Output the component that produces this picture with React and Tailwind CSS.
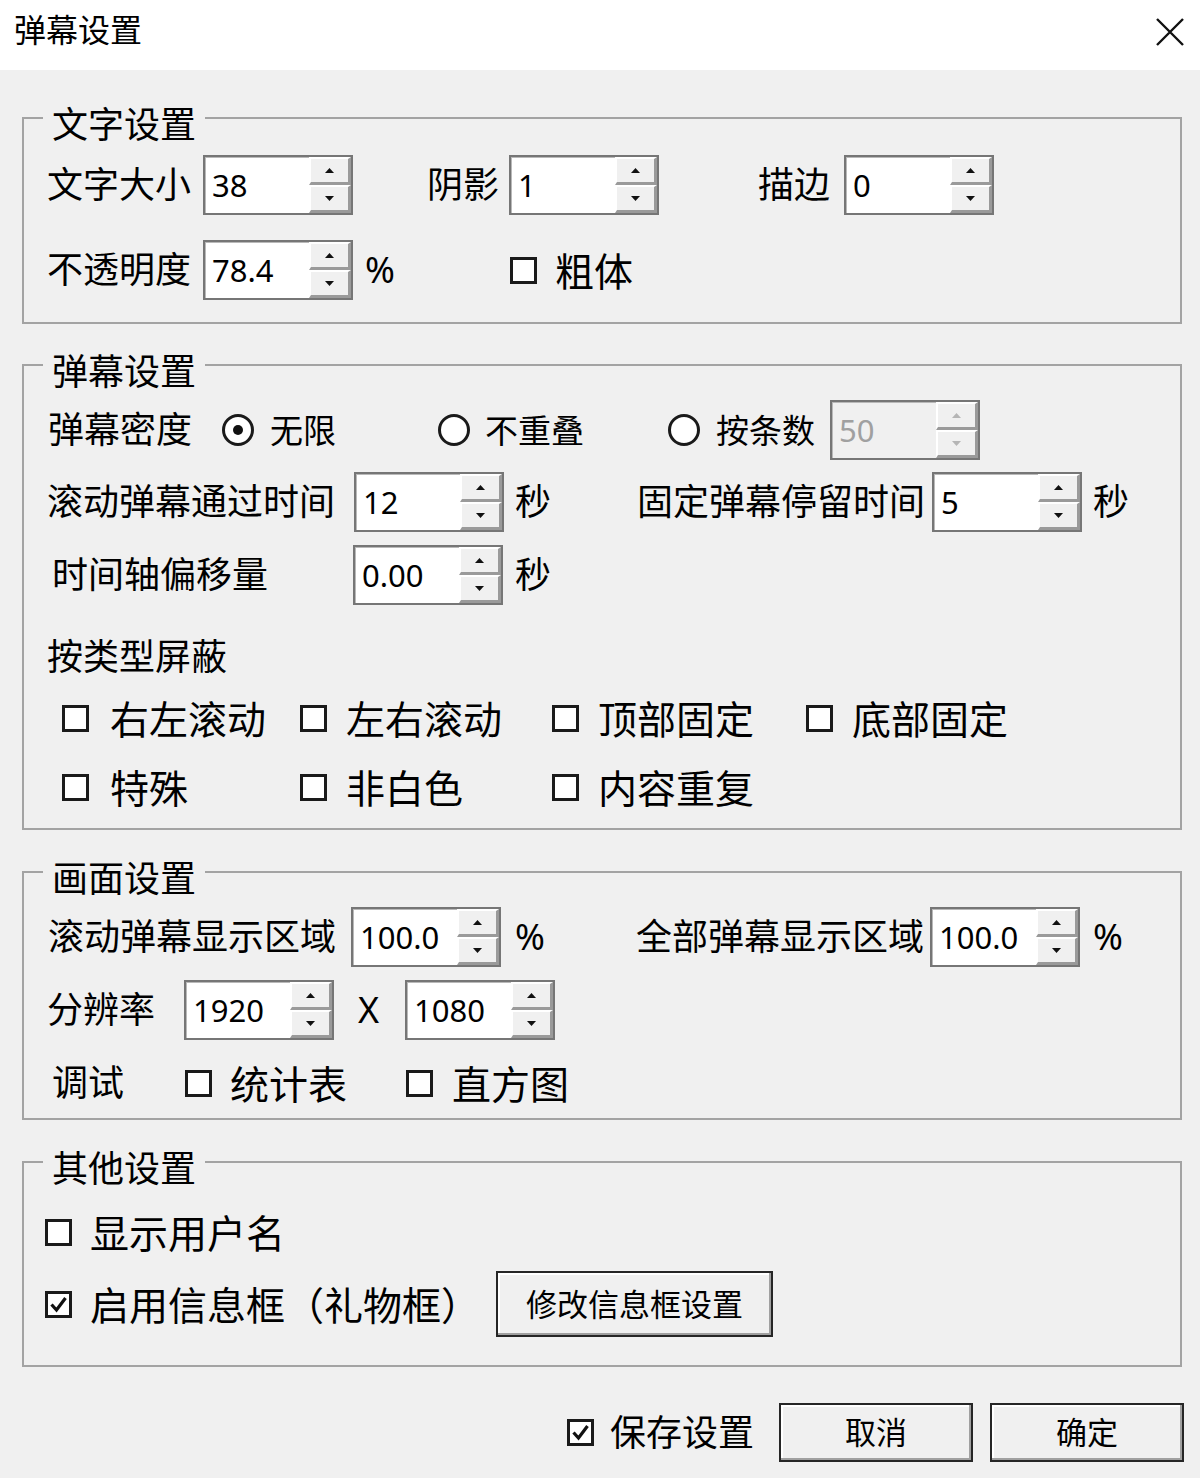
import React from "react";

function Spin({ value, disabled }) {
  return (
    <div
      className={
        "w-[150px] h-[60px] shrink-0 flex border-2 border-[#767676] shadow-[inset_1px_1px_0_#b9b9b9] " +
        (disabled ? "bg-[#f0f0f0] h-[58px]" : "bg-white")
      }
    >
      <div
        className={
          "flex-1 flex items-center pl-[7px] text-[31px] leading-none " +
          (disabled ? "text-[#a0a0a0]" : "text-black")
        }
      >
        {value}
      </div>
      <div className="w-[42px] flex flex-col">
        <SpinBtn up disabled={disabled} />
        <SpinBtn disabled={disabled} />
      </div>
    </div>
  );
}

function SpinBtn({ up, disabled }) {
  const c = disabled ? "#b5b5b5" : "#111";
  return (
    <div className="flex-1 bg-[#f0f0f0] border-t-2 border-l-2 border-t-white border-l-white border-b-[3px] border-r-[3px] border-b-[#9a9a9a] border-r-[#9a9a9a] flex items-center justify-center">
      <svg width="9" height="5" viewBox="0 0 9 5">
        {up ? <polygon points="4.5,0 9,5 0,5" fill={c} /> : <polygon points="0,0 9,0 4.5,5" fill={c} />}
      </svg>
    </div>
  );
}

function Check({ checked }) {
  return (
    <div className="w-[27px] h-[27px] shrink-0 border-[3px] border-[#1a1a1a] bg-white flex items-center justify-center">
      {checked && (
        <svg width="19" height="19" viewBox="0 0 19 19">
          <path d="M2.5 9.5 L7.5 15 L16.5 3" fill="none" stroke="#111" strokeWidth="3.2" />
        </svg>
      )}
    </div>
  );
}

function Radio({ checked }) {
  return (
    <div className="w-[32px] h-[32px] shrink-0 rounded-full border-[3px] border-[#1a1a1a] bg-white flex items-center justify-center">
      {checked && <div className="w-[10px] h-[10px] rounded-full bg-[#111]" />}
    </div>
  );
}

function Legend({ children }) {
  return (
    <legend className="ml-[19px] px-[9px] text-[36px] leading-none">
      <span className="relative top-[7px]">{children}</span>
    </legend>
  );
}

const btn =
  "border-2 border-[#262626] bg-[#f0f0f0] shadow-[inset_-2px_-2px_0_#a0a0a0,inset_2px_2px_0_#ffffff] text-[31px] leading-none flex items-center justify-center";

export default function App() {
  return (
    <div
      className="w-[1200px] min-h-[1478px] bg-[#f0f0f0] text-black"
      style={{ fontFamily: '"Noto Sans", "Noto Sans CJK SC", sans-serif' }}
    >
      {/* Title bar */}
      <div className="h-[70px] bg-white flex items-center justify-between pb-[10px]">
        <div className="pl-[14px] text-[32px] leading-none">弹幕设置</div>
        <div className="pr-[16px] pt-[4px]">
          <svg width="28" height="28" viewBox="0 0 28 28">
            <path d="M1 1 L27 27 M27 1 L1 27" stroke="#111" strokeWidth="2.4" />
          </svg>
        </div>
      </div>

      {/* 文字设置 */}
      <fieldset className="mt-[30px] ml-[22px] w-[1160px] border-2 border-[#a3a3a3] pb-[22px]">
        <Legend>文字设置</Legend>
        <div className="mt-[19px] h-[60px] flex items-center text-[36px] leading-none">
          <div className="ml-[23px] w-[156px]">文字大小</div>
          <Spin value="38" />
          <div className="ml-[74px] w-[82px]">阴影</div>
          <Spin value="1" />
          <div className="ml-[99px] w-[86px]">描边</div>
          <Spin value="0" />
        </div>
        <div className="mt-[25px] h-[60px] flex items-center text-[36px] leading-none">
          <div className="ml-[23px] w-[156px]">不透明度</div>
          <Spin value="78.4" />
          <div className="ml-[12px] w-[145px]">%</div>
          <Check />
          <div className="ml-[18px] text-[39px]">粗体</div>
        </div>
      </fieldset>

      {/* 弹幕设置 */}
      <fieldset className="mt-[23px] ml-[22px] w-[1160px] border-2 border-[#a3a3a3] pb-[21px]">
        <Legend>弹幕设置</Legend>
        <div className="mt-[18px] h-[58px] flex items-center text-[36px] leading-none">
          <div className="ml-[24px] w-[174px]">弹幕密度</div>
          <Radio checked />
          <div className="ml-[16px] w-[168px] text-[33px]">无限</div>
          <Radio />
          <div className="ml-[15px] w-[183px] text-[33px]">不重叠</div>
          <Radio />
          <div className="ml-[16px] w-[114px] text-[33px]">按条数</div>
          <Spin value="50" disabled />
        </div>
        <div className="mt-[13px] h-[60px] flex items-center text-[36px] leading-none">
          <div className="ml-[23px] w-[307px]">滚动弹幕通过时间</div>
          <Spin value="12" />
          <div className="ml-[11px] w-[122px]">秒</div>
          <div className="w-[295px]">固定弹幕停留时间</div>
          <Spin value="5" />
          <div className="ml-[11px]">秒</div>
        </div>
        <div className="mt-[13px] h-[60px] flex items-center text-[36px] leading-none">
          <div className="ml-[28px] w-[301px]">时间轴偏移量</div>
          <Spin value="0.00" />
          <div className="ml-[12px]">秒</div>
        </div>
        <div className="mt-[32px] h-[40px] flex items-center text-[36px] leading-none">
          <div className="ml-[23px]">按类型屏蔽</div>
        </div>
        <div className="mt-[21px] h-[40px] flex items-center text-[39px] leading-none">
          <div className="ml-[38px] w-[238px] flex items-center">
            <Check />
            <span className="ml-[21px]">右左滚动</span>
          </div>
          <div className="w-[252px] flex items-center">
            <Check />
            <span className="ml-[19px]">左右滚动</span>
          </div>
          <div className="w-[254px] flex items-center">
            <Check />
            <span className="ml-[19px]">顶部固定</span>
          </div>
          <div className="flex items-center">
            <Check />
            <span className="ml-[19px]">底部固定</span>
          </div>
        </div>
        <div className="mt-[29px] h-[40px] flex items-center text-[39px] leading-none">
          <div className="ml-[38px] w-[238px] flex items-center">
            <Check />
            <span className="ml-[21px]">特殊</span>
          </div>
          <div className="w-[252px] flex items-center">
            <Check />
            <span className="ml-[19px]">非白色</span>
          </div>
          <div className="w-[254px] flex items-center">
            <Check />
            <span className="ml-[19px]">内容重复</span>
          </div>
        </div>
      </fieldset>

      {/* 画面设置 */}
      <fieldset className="mt-[24px] ml-[22px] w-[1160px] border-2 border-[#a3a3a3] pb-[15px]">
        <Legend>画面设置</Legend>
        <div className="mt-[17px] h-[60px] flex items-center text-[36px] leading-none">
          <div className="ml-[24px] w-[303px] whitespace-nowrap">滚动弹幕显示区域</div>
          <Spin value="100.0" />
          <div className="ml-[14px] w-[121px]">%</div>
          <div className="w-[294px] whitespace-nowrap">全部弹幕显示区域</div>
          <Spin value="100.0" />
          <div className="ml-[13px]">%</div>
        </div>
        <div className="mt-[13px] h-[60px] flex items-center text-[36px] leading-none">
          <div className="ml-[23px] w-[137px]">分辨率</div>
          <Spin value="1920" />
          <div className="ml-[24px] w-[47px]">X</div>
          <Spin value="1080" />
        </div>
        <div className="mt-[23px] h-[40px] flex items-center text-[36px] leading-none">
          <div className="ml-[28px] w-[133px]">调试</div>
          <div className="w-[221px] flex items-center text-[39px]">
            <Check />
            <span className="ml-[18px]">统计表</span>
          </div>
          <div className="flex items-center text-[39px]">
            <Check />
            <span className="ml-[19px]">直方图</span>
          </div>
        </div>
      </fieldset>

      {/* 其他设置 */}
      <fieldset className="mt-[24px] ml-[22px] w-[1160px] border-2 border-[#a3a3a3] pb-[28px]">
        <Legend>其他设置</Legend>
        <div className="mt-[32px] h-[40px] flex items-center text-[39px] leading-none">
          <div className="ml-[21px] flex items-center">
            <Check />
            <span className="ml-[18px]">显示用户名</span>
          </div>
        </div>
        <div className="mt-[19px] h-[66px] flex items-center text-[39px] leading-none">
          <div className="ml-[21px] w-[451px] flex items-center">
            <Check checked />
            <span className="ml-[18px] whitespace-nowrap">启用信息框（礼物框）</span>
          </div>
          <button className={"w-[277px] h-[66px] " + btn}>修改信息框设置</button>
        </div>
      </fieldset>

      {/* Bottom row */}
      <div className="mt-[36px] h-[59px] flex items-center justify-end pr-[16px] text-[36px] leading-none">
        <Check checked />
        <span className="ml-[16px] mr-[25px]">保存设置</span>
        <button className={"w-[194px] h-[59px] " + btn}>取消</button>
        <button className={"ml-[17px] w-[194px] h-[59px] " + btn}>确定</button>
      </div>
    </div>
  );
}
